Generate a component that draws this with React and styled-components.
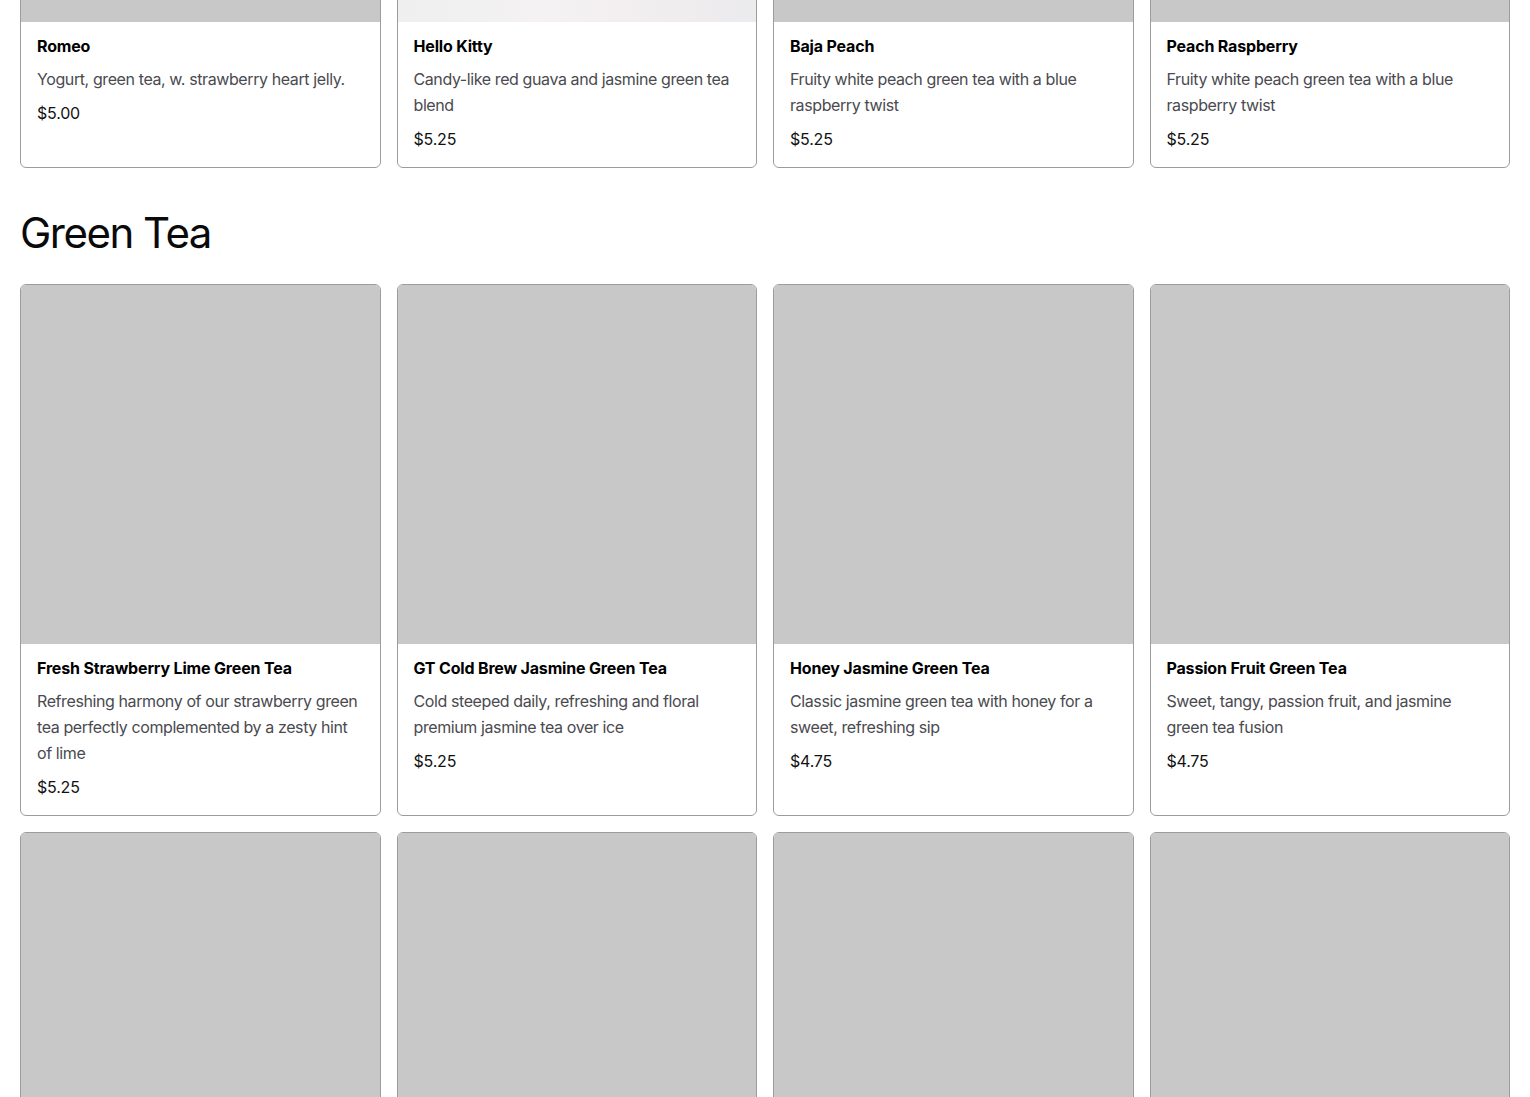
import React from 'react';
import styled, { createGlobalStyle } from 'styled-components';

const GlobalStyle = createGlobalStyle`
  * { box-sizing: border-box; }
  body {
    margin: 0;
    background: #fff;
    font-family: Inter, "Noto Sans", "Liberation Sans", sans-serif;
    color: #111;
  }
`;

const Page = styled.main`
  padding: 0 20px 40px;
  margin-top: -337.5px;
`;

const Section = styled.section`
  & + & { margin-top: 40px; }
`;

const Heading = styled.h2`
  margin: 0 0 26px;
  font-size: 42px;
  line-height: 50px;
  font-weight: 400;
  letter-spacing: -1.5px;
  color: #0a0a0a;
`;

const Grid = styled.div`
  display: grid;
  grid-template-columns: repeat(4, 1fr);
  gap: 16px;
`;

const Card = styled.article`
  border: 1px solid #9c9c9c;
  border-radius: 6px;
  overflow: hidden;
  background: #fff;
  display: flex;
  flex-direction: column;
`;

const Photo = styled.div`
  aspect-ratio: 1 / 1;
  background: ${(p) => p.$tone || '#c8c8c8'};
`;

const Body = styled.div`
  padding: 12px 16px 16px;
  display: flex;
  flex-direction: column;
  gap: 8px;
`;

const Name = styled.h3`
  margin: 0;
  font-size: 16px;
  line-height: 24px;
  font-weight: 700;
  letter-spacing: -0.17px;
  color: #000;
`;

const Desc = styled.p`
  margin: 0;
  font-size: 16px;
  line-height: 26px;
  letter-spacing: -0.4px;
  color: #4a4a4f;
`;

const Price = styled.p`
  margin: 1px 0 0;
  font-size: 16px;
  line-height: 24px;
  letter-spacing: -0.2px;
  color: #111;
`;

const kittyTone = 'linear-gradient(90deg, #efeff0 0%, #f4f2f3 40%, #f3eff0 60%, #ebeaec 100%)';

const sections = [
  {
    title: 'Yogurt',
    items: [
      { name: 'Romeo', desc: 'Yogurt, green tea, w. strawberry heart jelly.', price: '$5.00' },
      { name: 'Hello Kitty', desc: 'Candy-like red guava and jasmine green tea blend', price: '$5.25', tone: kittyTone },
      { name: 'Baja Peach', desc: 'Fruity white peach green tea with a blue raspberry twist', price: '$5.25' },
      { name: 'Peach Raspberry', desc: 'Fruity white peach green tea with a blue raspberry twist', price: '$5.25' },
    ],
  },
  {
    title: 'Green Tea',
    items: [
      { name: 'Fresh Strawberry Lime Green Tea', desc: 'Refreshing harmony of our strawberry green tea perfectly complemented by a zesty hint of lime', price: '$5.25' },
      { name: 'GT Cold Brew Jasmine Green Tea', desc: 'Cold steeped daily, refreshing and floral premium jasmine tea over ice', price: '$5.25' },
      { name: 'Honey Jasmine Green Tea', desc: 'Classic jasmine green tea with honey for a sweet, refreshing sip', price: '$4.75' },
      { name: 'Passion Fruit Green Tea', desc: 'Sweet, tangy, passion fruit, and jasmine green tea fusion', price: '$4.75' },
      { name: 'Lychee Green Tea', desc: 'Floral jasmine green tea with sweet lychee', price: '$4.75' },
      { name: 'Mango Green Tea', desc: 'Tropical mango and jasmine green tea', price: '$4.75' },
      { name: 'Grapefruit Green Tea', desc: 'Zesty grapefruit with jasmine green tea', price: '$5.25' },
      { name: 'Kumquat Green Tea', desc: 'Tart kumquat and jasmine green tea', price: '$5.25' },
    ],
  },
];

const App = () => {
  return (
    <>
      <GlobalStyle />
      <Page>
        {sections.map((section, i) => (
          <Section key={section.title}>
            {i > 0 && <Heading>{section.title}</Heading>}
            <Grid>
              {section.items.map((item) => (
                <Card key={item.name}>
                  <Photo $tone={item.tone} />
                  <Body>
                    <Name>{item.name}</Name>
                    <Desc>{item.desc}</Desc>
                    <Price>{item.price}</Price>
                  </Body>
                </Card>
              ))}
            </Grid>
          </Section>
        ))}
      </Page>
    </>
  );
};

export default App;
